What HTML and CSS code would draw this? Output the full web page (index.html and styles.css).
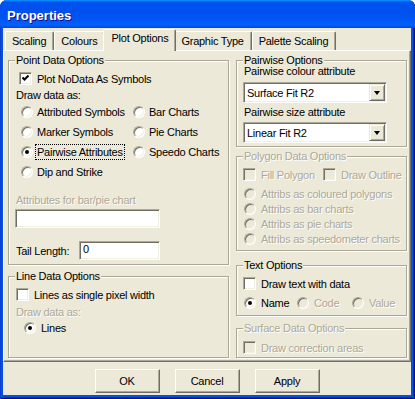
FILE: index.html
```html
<!DOCTYPE html>
<html lang="en">
<head>
  <meta charset="UTF-8">
  <title>Properties</title>
  <link rel="stylesheet" href="styles.css">
</head>
<body>

<div class="window">
  <div class="titlebar"><span class="title">Properties</span></div>

  <div class="client">
    <div class="tabs">
      <div class="tab">Scaling</div>
      <div class="tab">Colours</div>
      <div class="tab active">Plot Options</div>
      <div class="tab">Graphic Type</div>
      <div class="tab">Palette Scaling</div>
    </div>

    <div class="panel">
      <div class="col col-left">

        <div class="group g-point">
          <div class="caption">Point Data Options</div>
          <label class="row r-nodata"><span class="check"><svg width="7" height="7" viewBox="0 0 7 7"><polyline points="0.5,2.5 2.5,4.5 6.5,0.5" fill="none" stroke="#000" stroke-width="2"/></svg></span>Plot NoData As Symbols</label>
          <div class="note r-draw">Draw data as:</div>
          <div class="radio-grid">
            <label class="row"><span class="radio"></span>Attributed Symbols</label>
            <label class="row"><span class="radio"></span>Bar Charts</label>
            <label class="row"><span class="radio"></span>Marker Symbols</label>
            <label class="row"><span class="radio"></span>Pie Charts</label>
            <label class="row"><span class="radio on"></span><span class="focus">Pairwise Attributes</span></label>
            <label class="row"><span class="radio"></span>Speedo Charts</label>
            <label class="row"><span class="radio"></span>Dip and Strike</label>
          </div>
          <div class="note dim r-attr">Attributes for bar/pie chart</div>
          <div class="edit e-attr"></div>
          <div class="row r-tail">
            <span class="tail-label">Tail Length:</span>
            <div class="edit e-tail">0</div>
          </div>
        </div>

        <div class="group g-line">
          <div class="caption">Line Data Options</div>
          <label class="row r-single"><span class="check"></span>Lines as single pixel width</label>
          <div class="note dim r-draw2">Draw data as:</div>
          <label class="row r-lines"><span class="radio on"></span>Lines</label>
        </div>

      </div>

      <div class="col col-right">

        <div class="group g-pair">
          <div class="caption">Pairwise Options</div>
          <div class="note r-plabel1">Pairwise colour attribute</div>
          <div class="select s-first"><span class="select-text">Surface Fit R2</span><span class="drop"></span></div>
          <div class="note r-plabel2">Pairwise size attribute</div>
          <div class="select s-second"><span class="select-text">Linear Fit R2</span><span class="drop"></span></div>
        </div>

        <div class="group g-poly">
          <div class="caption dim">Polygon Data Options</div>
          <div class="row r-polychecks">
            <label class="row cell-fill dim"><span class="check off"></span>Fill Polygon</label>
            <label class="row dim"><span class="check off"></span>Draw Outline</label>
          </div>
          <div class="poly-radios">
            <label class="row dim"><span class="radio off"></span>Attribs as coloured polygons</label>
            <label class="row dim"><span class="radio off"></span>Attribs as bar charts</label>
            <label class="row dim"><span class="radio off"></span>Attribs as pie charts</label>
            <label class="row dim"><span class="radio off"></span>Attribs as speedometer charts</label>
          </div>
        </div>

        <div class="group g-text">
          <div class="caption">Text Options</div>
          <label class="row r-drawtext"><span class="check"></span>Draw text with data</label>
          <div class="row r-textradios">
            <label class="row cell-name"><span class="radio on"></span>Name</label>
            <label class="row cell-code dim"><span class="radio off"></span>Code</label>
            <label class="row dim"><span class="radio off"></span>Value</label>
          </div>
        </div>

        <div class="group g-surface">
          <div class="caption dim">Surface Data Options</div>
          <label class="row r-correction dim"><span class="check off"></span>Draw correction areas</label>
        </div>

      </div>
    </div>

    <div class="buttons">
      <button class="btn">OK</button>
      <button class="btn">Cancel</button>
      <button class="btn">Apply</button>
    </div>
  </div>
</div>

</body>
</html>
```

FILE: styles.css
```css
* {
  box-sizing: border-box;
}
body {
  margin: 0;
  background: #fff;
  font-family: "Liberation Sans", Arial, sans-serif;
  font-size: 11px;
  letter-spacing: -0.25px;
  color: #000;
}

/* window frame */
.window {
  width: 415px;
  height: 399px;
  display: flex;
  flex-direction: column;
  background: #0651e0;
  border-radius: 7px 7px 0 0;
  box-shadow: inset 1px 0 #0a3fcf, inset -1px -1px #00138c, inset -2px -2px #0033c8;
}
.titlebar {
  height: 28px;
  padding: 5px 0 0 7px;
  border-radius: 7px 7px 0 0;
  background: linear-gradient(180deg, #0997ff 0%, #0053ee 8%, #0050ee 40%, #0055f5 70%, #0161fc 88%, #0046d8 100%);
}
.title {
  color: #fff;
  font-weight: bold;
  font-size: 13px;
  letter-spacing: 0;
  line-height: 22px;
  text-shadow: 1px 1px #0f1089;
}
.client {
  flex: 1;
  margin: 0 4px 4px 3px;
  background: #ece9d8;
}

/* tabs */
.tabs {
  display: flex;
  align-items: flex-end;
  height: 21px;
  margin-top: 1px;
  padding-left: 2px;
}
.tab {
  height: 19px;
  padding: 0 7px 0 6px;
  line-height: 18px;
  border: 1px solid;
  border-bottom: none;
  border-color: #fff #716f64 transparent #fff;
  border-radius: 2px 2px 0 0;
  box-shadow: inset -1px 0 #aca899;
  white-space: nowrap;
}
.tab.active {
  position: relative;
  z-index: 1;
  height: 22px;
  margin: 0 -2px -1px;
  padding: 0 7px;
  line-height: 17px;
  background: #ece9d8;
}

.panel {
  height: 312px;
  display: flex;
  gap: 7px;
  padding: 9px 0 0 4px;
  border: 1px solid;
  border-color: #fff #716f64 #716f64 #fff;
  box-shadow: inset -1px -1px #aca899;
}
.col {
  display: flex;
  flex-direction: column;
}
.col-left {
  width: 221px;
}
.col-right {
  width: 171px;
}

/* group boxes */
.group {
  border: 1px solid #aca899;
  box-shadow: 1px 1px 0 #fff, inset 1px 1px 0 #fff;
}
.caption {
  width: max-content;
  margin: -7px 0 0 6px;
  padding: 0 1px;
  line-height: 13px;
  background: #ece9d8;
}
.g-point { height: 205px; }
.g-line { height: 82px; margin-top: 11px; }
.g-pair { height: 87px; }
.g-poly { height: 95px; margin-top: 9px; }
.g-text { height: 51px; margin-top: 14px; }
.g-surface { height: 30px; margin-top: 12px; }

.row {
  display: flex;
  align-items: center;
  gap: 5px;
  white-space: nowrap;
}
.note {
  line-height: 13px;
  padding-left: 7px;
}
.dim {
  color: #aca899;
  text-shadow: 1px 1px #fff;
}

/* checkbox and radio */
.check {
  flex: none;
  width: 13px;
  height: 13px;
  display: flex;
  align-items: center;
  justify-content: center;
  border: 1px solid;
  border-color: #aca899 #fff #fff #aca899;
  box-shadow: inset 1px 1px #716f64, inset -1px -1px #f1efe2;
  background: #fff;
}
.radio {
  flex: none;
  width: 12px;
  height: 12px;
  display: flex;
  align-items: center;
  justify-content: center;
  border: 1px solid;
  border-radius: 50%;
  border-color: #aca899 #fff #fff #aca899;
  box-shadow: inset 1px 1px #716f64, inset -1px -1px #f1efe2;
  background: #fff;
}
.radio.on::after {
  content: "";
  width: 4px;
  height: 4px;
  border-radius: 50%;
  background: #000;
}
.check.off,
.radio.off {
  background: #ece9d8;
}
.focus {
  outline: 1px dotted #000;
  outline-offset: 1px;
}

/* point data */
.r-nodata { height: 13px; margin-top: 5px; padding-left: 10px; }
.r-draw { margin-top: 4px; }
.radio-grid {
  display: grid;
  grid-template-columns: 112px auto;
  grid-auto-rows: 20px;
  padding-left: 12px;
}
.radio-grid .row { gap: 4px; }
.r-attr { margin-top: 12px; }

.edit {
  height: 19px;
  padding-left: 3px;
  line-height: 15px;
  border: 1px solid;
  border-color: #aca899 #fff #fff #aca899;
  box-shadow: inset 1px 1px #716f64, inset -1px -1px #f1efe2;
  background: #fff;
}
.e-attr { width: 145px; margin: 2px 0 0 6px; }
.r-tail { height: 19px; margin-top: 13px; padding-left: 7px; gap: 0; }
.tail-label { width: 63px; }
.e-tail { width: 81px; }

/* line data */
.r-single { height: 13px; margin-top: 5px; padding-left: 7px; }
.r-draw2 { margin-top: 5px; }
.r-lines { height: 18px; padding-left: 15px; }

/* pairwise */
.r-plabel1 { margin-top: -2px; }
.r-plabel2 { margin-top: 3px; }
.select {
  width: 144px;
  height: 21px;
  display: flex;
  align-items: center;
  margin-left: 6px;
  border: 1px solid;
  border-color: #aca899 #fff #fff #aca899;
  box-shadow: inset 1px 1px #716f64, inset -1px -1px #f1efe2;
  background: #fff;
  padding: 1px;
}
.s-first { margin-top: 4px; }
.s-second { margin-top: 3px; }
.select-text {
  flex: 1;
  padding-left: 2px;
}
.drop {
  width: 16px;
  height: 17px;
  display: flex;
  align-items: center;
  justify-content: center;
  border: 1px solid;
  border-color: #ece9d8 #716f64 #716f64 #ece9d8;
  box-shadow: inset 1px 1px #fff, inset -1px -1px #aca899;
  background: #ece9d8;
}
.drop::after {
  content: "";
  border-style: solid;
  border-width: 4px 3.5px 0;
  border-color: #000 transparent transparent;
}

/* polygon */
.r-polychecks { height: 13px; margin-top: 5px; padding-left: 6px; gap: 0; }
.cell-fill { width: 80px; }
.poly-radios {
  display: grid;
  grid-auto-rows: 15px;
  margin-top: 5px;
  padding-left: 7px;
}

/* text options */
.r-drawtext { height: 13px; margin-top: 5px; padding-left: 6px; }
.r-textradios { height: 14px; margin-top: 6px; padding-left: 7px; gap: 0; }
.cell-name { width: 53px; }
.cell-code { width: 55px; }

/* surface */
.r-correction { height: 13px; margin-top: 6px; padding-left: 6px; }

/* dialog buttons */
.buttons {
  display: flex;
  justify-content: center;
  gap: 15px;
  margin-top: 7px;
}
.btn {
  width: 65px;
  height: 24px;
  padding: 0;
  font: inherit;
  letter-spacing: -0.25px;
  color: #000;
  background: #ece9d8;
  border: 1px solid;
  border-color: #fff #716f64 #716f64 #fff;
  box-shadow: inset -1px -1px #aca899;
  border-radius: 0;
}
```
